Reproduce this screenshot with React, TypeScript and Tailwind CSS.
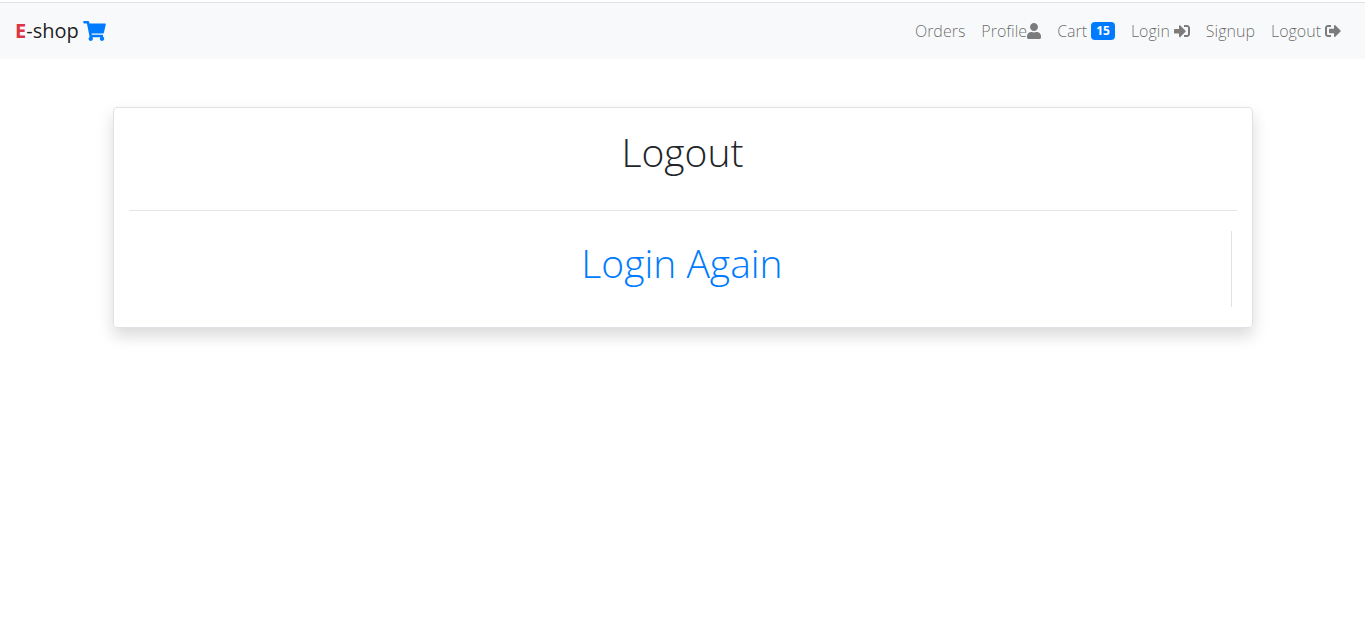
import React from "react";
import { FaShoppingCart, FaUser, FaSignInAlt, FaSignOutAlt } from "react-icons/fa";

const navLink = "flex items-center p-2 text-base leading-6 font-light text-black/60 hover:text-black/80";
const navIcon = "text-black/50";

export default function App() {
  return (
    <div className="min-h-screen bg-white pt-0.5 font-['Open_Sans',sans-serif] text-[#212529]">
      <nav className="flex items-center justify-between border-t border-[#dee2e6] bg-[#f8f9fa] py-2 pr-4 pl-[15px]">
        <a href="#" className="flex items-center gap-1 text-xl text-black/90">
          <span><span className="font-bold text-[#dc3545]">E</span>-shop</span>
          <FaShoppingCart className="h-5 w-[23px] text-[#007bff]" />
        </a>
        <ul className="flex items-center">
          <li><a href="#" className={navLink}>Orders</a></li>
          <li><a href="#" className={navLink}>Profile<FaUser className={`${navIcon} h-4 w-3.5`} /></a></li>
          <li>
            <a href="#" className={`${navLink} gap-1`}>
              Cart <span className="rounded bg-[#007bff] px-[5px] text-xs leading-[18px] font-bold text-white">15</span>
            </a>
          </li>
          <li><a href="#" className={`${navLink} gap-1`}>Login <FaSignInAlt className={`${navIcon} size-4`} /></a></li>
          <li><a href="#" className={navLink}>Signup</a></li>
          <li><a href="#" className={`${navLink} gap-1`}>Logout <FaSignOutAlt className={`${navIcon} size-4`} /></a></li>
        </ul>
      </nav>
      <main className="mx-auto mt-12 max-w-[1140px] rounded border border-[#dee2e6] px-[15px] py-5 text-center text-[39px] leading-[48px] font-light shadow-[0_8px_16px_rgba(0,0,0,0.15)]">
        <h1>Logout</h1>
        <hr className="mt-[34px] mb-5 border-black/10" />
        <div className="mx-[5px] border-r border-[#dee2e6] pt-2 pb-5">
          <a href="#" className="text-[#007bff]">Login Again</a>
        </div>
      </main>
    </div>
  );
}
